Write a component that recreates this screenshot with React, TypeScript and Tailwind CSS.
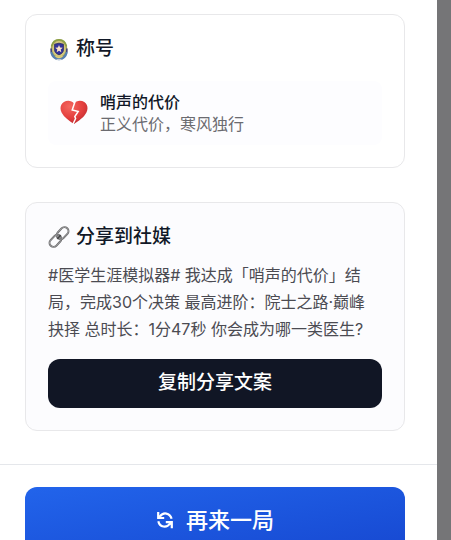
import type { ReactNode } from "react";

const shareLines = [
	"#医学生涯模拟器# 我达成「哨声的代价」结",
	"局，完成30个决策 最高进阶：院士之路·巅峰",
	"抉择 总时长：1分47秒 你会成为哪一类医生?",
];

function BadgeIcon() {
	return (
		<svg viewBox="0 0 22 24" className="h-6 w-[22px] shrink-0" aria-hidden="true">
			<ellipse cx="11" cy="12.500" rx="8.500" ry="10.600" fill="#a5a25a" />
			<path d="M3.500 9.500C4.500 5 7.400 2.700 11 2.700s6.500 2.300 7.500 6.800" fill="none" stroke="#8ba045" strokeWidth="1.600" />
			<path d="M3.200 15c1.200 4.600 4.200 7 7.800 7s6.600-2.400 7.800-7" fill="none" stroke="#5680b0" strokeWidth="2.400" />
			<ellipse cx="11" cy="12" rx="6.800" ry="7.900" fill="#d2c77c" />
			<path d="M3.200 11.500V15M18.800 11.500V15" stroke="#404280" strokeWidth="1.500" />
			<path d="M6.600 7.200 11 6.200l4.400 1v5.600c0 2.400-1.700 4-4.400 5-2.700-1-4.400-2.600-4.400-5z" fill="#34349a" stroke="#262668" strokeWidth=".8" />
			<path d="m11 8 1.100 2.600 2.700.2-2.100 1.800.6 2.700-2.300-1.500-2.300 1.500.6-2.700-2.100-1.800 2.700-.2z" fill="#fbe3c4" />
			<path d="M7.500 19.300c2 1.400 5 1.400 7 0" fill="none" stroke="#e3cf7a" strokeWidth="1.300" />
			<path d="M8.500 22.500h5" stroke="#c3c8d6" strokeWidth="1.200" />
		</svg>
	);
}

function BrokenHeartIcon() {
	return (
		<svg viewBox="0 0 28 28" className="size-7 shrink-0" aria-hidden="true">
			<defs>
				<radialGradient id="heart" cx=".35" cy=".25" r=".8">
					<stop offset="0" stopColor="#f4675f" />
					<stop offset=".6" stopColor="#e43f3e" />
					<stop offset="1" stopColor="#bd2b30" />
				</radialGradient>
			</defs>
			<path
				d="M14 4.500C11.700 1.500 7.300 1 3.900 3 .1 5.300-.3 10 1.700 13.800c2.400 4.400 7.200 8 12.300 11.200 4.900-3.200 10-6.800 12.300-11.200 2-3.800 1.600-8.500-2-10.800C20.900 1 16.300 1.500 14 4.500z"
				fill="url(#heart)"
			/>
			<path
				d="m15 2.800-2.800 8.200 6 1.500-3.400 5 .8 2-2.800 6"
				fill="none"
				stroke="#fff"
				strokeWidth="1.500"
				strokeLinejoin="miter"
			/>
		</svg>
	);
}

function LinkIcon() {
	return (
		<svg viewBox="0 0 22 24" className="h-6 w-[22px] shrink-0" fill="none" aria-hidden="true">
			<g transform="rotate(-47 11 12)">
				<rect x="-1" y="8" width="13.500" height="8" rx="4" stroke="#6a6a6c" strokeWidth="2" />
				<rect x="-1" y="8" width="13.500" height="8" rx="4" stroke="#b2b2b4" strokeWidth=".6" />
				<rect x="9.500" y="8" width="13.500" height="8" rx="4" stroke="#6a6a6c" strokeWidth="2" />
				<rect x="9.500" y="8" width="13.500" height="8" rx="4" stroke="#b2b2b4" strokeWidth=".6" />
				<path d="M8.500 12h5" stroke="#444446" strokeWidth="1.800" />
			</g>
		</svg>
	);
}

function RestartIcon() {
	return (
		<svg viewBox="0 0 18 18" className="size-[18px] shrink-0" fill="none" stroke="currentColor" strokeWidth="2.200" aria-hidden="true">
			<path d="M4 5.500C7 .8 14 1.600 15.600 7.800M2.300 10.200c1.400 6.200 8.400 7.200 11.700 2.300" />
			<path d="M2.200 1v6h6M9.800 11.200h6v6" />
			<path d="M2.200 3 6 7H2.200zM15.800 15.200 12 11.200h3.800z" fill="currentColor" stroke="none" />
		</svg>
	);
}

function Card({ icon, title, className, children }: { icon: ReactNode; title: string; className: string; children: ReactNode }) {
	return (
		<section className={`rounded-xl border border-[#e8e8ea] p-[22px] ${className}`}>
			<h2 className="flex items-center gap-[6px] text-[19px] leading-6 font-medium text-[#111827]">
				{icon}
				{title}
			</h2>
			{children}
		</section>
	);
}

export default function App() {
	return (
		<div className="h-screen overflow-hidden bg-[#757577] pr-[14px] font-['Inter','Noto_Sans_CJK_SC',sans-serif]">
			<main className="min-h-full bg-white">
				<div className="flex flex-col gap-[34px] pt-[14px] pr-8 pb-[33px] pl-[25px]">
					<Card icon={<BadgeIcon />} title="称号" className="bg-white">
						<div className="mt-5 flex items-center gap-3 rounded-lg bg-[#fdfdff] px-3 py-[10px] leading-[22px]">
							<BrokenHeartIcon />
							<div>
								<div className="font-medium text-[#111827]">哨声的代价</div>
								<div className="text-[#6b6b70]">正义代价，寒风独行</div>
							</div>
						</div>
					</Card>
					<Card icon={<LinkIcon />} title="分享到社媒" className="bg-[#fcfcfe]">
						<p className="mt-[13px] leading-[27px] text-[#4b4b52]">
							{shareLines.map((line) => (
								<span key={line} className="block whitespace-nowrap">
									{line}
								</span>
							))}
						</p>
						<button className="mt-4 h-[49px] w-full rounded-xl bg-[#111625] text-[19px] font-medium text-white">
							复制分享文案
						</button>
					</Card>
				</div>
				<footer className="border-t border-[#e5e7eb] pt-[22px] pr-8 pb-6 pl-[25px]">
					<button className="flex h-[66px] w-full items-center justify-center gap-3 rounded-xl bg-linear-to-br from-[#2264eb] to-[#1748d1] text-[22px] font-medium text-white">
						<RestartIcon />
						再来一局
					</button>
				</footer>
			</main>
		</div>
	);
}
